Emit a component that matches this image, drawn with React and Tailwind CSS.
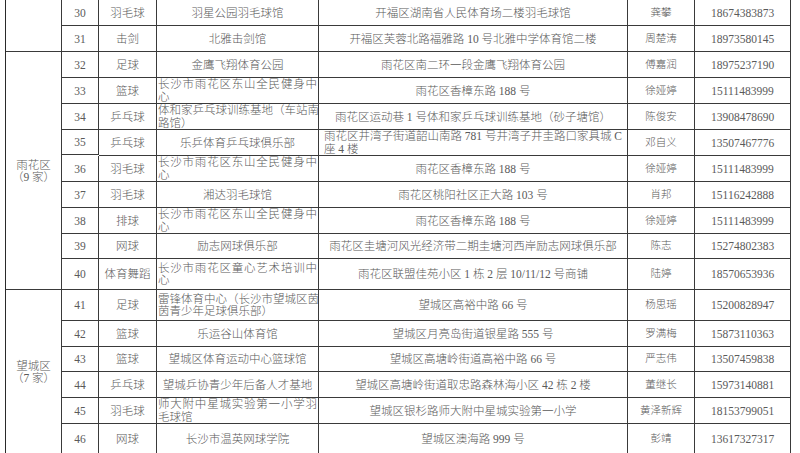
const rows = [
  { no: 30, sport: '羽毛球', venue: '羽星公园羽毛球馆', addr: '开福区湖南省人民体育场二楼羽毛球馆', name: '龚攀', tel: '18674383873', h: 'h-[26px]' },
  { no: 31, sport: '击剑', venue: '北雅击剑馆', addr: '开福区芙蓉北路福雅路 10 号北雅中学体育馆二楼', name: '周楚涛', tel: '18973580145', h: 'h-[26px]' },
  { no: 32, sport: '足球', venue: '金鹰飞翔体育公园', addr: '雨花区南二环一段金鹰飞翔体育公园', name: '傅嘉润', tel: '18975237190', h: 'h-[26px]' },
  { no: 33, sport: '篮球', venue: ['长沙市雨花区东山全民健身中', '心'], addr: '雨花区香樟东路 188 号', name: '徐娅婷', tel: '15111483999', h: 'h-[26px]' },
  { no: 34, sport: '乒乓球', venue: ['体和家乒乓球训练基地（车站南', '路馆）'], addr: '雨花区运动巷 1 号体和家乒乓球训练基地（砂子塘馆）', name: '陈俊安', tel: '13908478690', h: 'h-[26px]' },
  { no: 35, sport: '乒乓球', venue: '乐乒体育乒乓球俱乐部', addr: ['雨花区井湾子街道韶山南路 781 号井湾子井圭路口家具城 C', '座 4 楼'], name: '邓自义', tel: '13507467776', h: 'h-[25px]' },
  { no: 36, sport: '羽毛球', venue: ['长沙市雨花区东山全民健身中', '心'], addr: '雨花区香樟东路 188 号', name: '徐娅婷', tel: '15111483999', h: 'h-[26px]' },
  { no: 37, sport: '羽毛球', venue: '湘达羽毛球馆', addr: '雨花区桃阳社区正大路 103 号', name: '肖邦', tel: '15116242888', h: 'h-[26px]' },
  { no: 38, sport: '排球', venue: ['长沙市雨花区东山全民健身中', '心'], addr: '雨花区香樟东路 188 号', name: '徐娅婷', tel: '15111483999', h: 'h-[26px]' },
  { no: 39, sport: '网球', venue: '励志网球俱乐部', addr: '雨花区圭塘河风光经济带二期圭塘河西岸励志网球俱乐部', name: '陈志', tel: '15274802383', h: 'h-[25px]' },
  { no: 40, sport: '体育舞蹈', venue: ['长沙市雨花区童心艺术培训中', '心'], addr: '雨花区联盟佳苑小区 1 栋 2 层 10/11/12 号商铺', name: '陆婷', tel: '18570653936', h: 'h-[31px]' },
  { no: 41, sport: '足球', venue: ['雷锋体育中心（长沙市望城区茵', '茵青少年足球俱乐部）'], addr: '望城区高裕中路 66 号', name: '杨思瑶', tel: '15200828947', h: 'h-[31px]' },
  { no: 42, sport: '篮球', venue: '乐运谷山体育馆', addr: '望城区月亮岛街道银星路 555 号', name: '罗满梅', tel: '15873110363', h: 'h-[26px]' },
  { no: 43, sport: '篮球', venue: '望城区体育运动中心篮球馆', addr: '望城区高塘岭街道高裕中路 66 号', name: '严志伟', tel: '13507459838', h: 'h-[25px]' },
  { no: 44, sport: '乒乓球', venue: '望城乒协青少年后备人才基地', addr: '望城区高塘岭街道取忠路森林海小区 42 栋 2 楼', name: '董继长', tel: '15973140881', h: 'h-[26px]' },
  { no: 45, sport: '羽毛球', venue: ['师大附中星城实验第一小学羽', '毛球馆'], addr: '望城区银杉路师大附中星城实验第一小学', name: '黄泽新辉', tel: '18153799051', h: 'h-[26px]' },
  { no: 46, sport: '网球', venue: '长沙市温英网球学院', addr: '望城区澳海路 999 号', name: '彭靖', tel: '13617327317', h: 'h-[30px]' },
]

// 区县合并单元格：起始行 -> 跨行
const districts = {
  30: { span: 'row-span-2', lines: [] },
  32: { span: 'row-span-9', lines: ['雨花区', '（9 家）'] },
  41: { span: 'row-span-6', lines: ['望城区', '（7 家）'] },
}

const cell = 'border-r border-b border-[#3a3a3a] flex items-center justify-center text-center whitespace-nowrap overflow-hidden'

function Wrapped({ lines, pad }) {
  return (
    <div className={`w-full flex flex-col text-left leading-[12.5px] ${pad}`}>
      <div className="text-justify [text-align-last:justify]">{lines[0]}</div>
      <div>{lines[1]}</div>
    </div>
  )
}

export default function App() {
  return (
    <div
      className="w-[800px] h-[453px] bg-white overflow-hidden text-[11.5px] leading-[12px] font-light text-[#5a5a5a]"
      style={{ fontFamily: '"Liberation Serif", "Noto Sans CJK SC", serif' }}
    >
      <div className="ml-[5px] w-[786px] grid grid-cols-[56px_37px_58px_162px_309px_67px_96px] border-l border-[#2a2a2a]">
        {rows.map((r) => {
          const d = districts[r.no]
          return [
            d && (
              <div key={`d${r.no}`} className={`${cell} ${d.span} flex-col`}>
                {d.lines.map((l) => (
                  <div key={l}>{l}</div>
                ))}
              </div>
            ),
            <div key={`n${r.no}`} className={`${cell} ${r.h}`}>{r.no}</div>,
            <div key={`s${r.no}`} className={cell}>{r.sport}</div>,
            <div key={`v${r.no}`} className={cell}>
              {Array.isArray(r.venue) ? <Wrapped lines={r.venue} pad="pl-px pr-px" /> : r.venue}
            </div>,
            <div key={`a${r.no}`} className={cell}>
              {Array.isArray(r.addr) ? <Wrapped lines={r.addr} pad="pl-[5px] pr-[7px]" /> : r.addr}
            </div>,
            <div key={`c${r.no}`} className={`${cell} text-[10.5px]`}>{r.name}</div>,
            <div key={`t${r.no}`} className={cell}>{r.tel}</div>,
          ]
        })}
      </div>
    </div>
  )
}
